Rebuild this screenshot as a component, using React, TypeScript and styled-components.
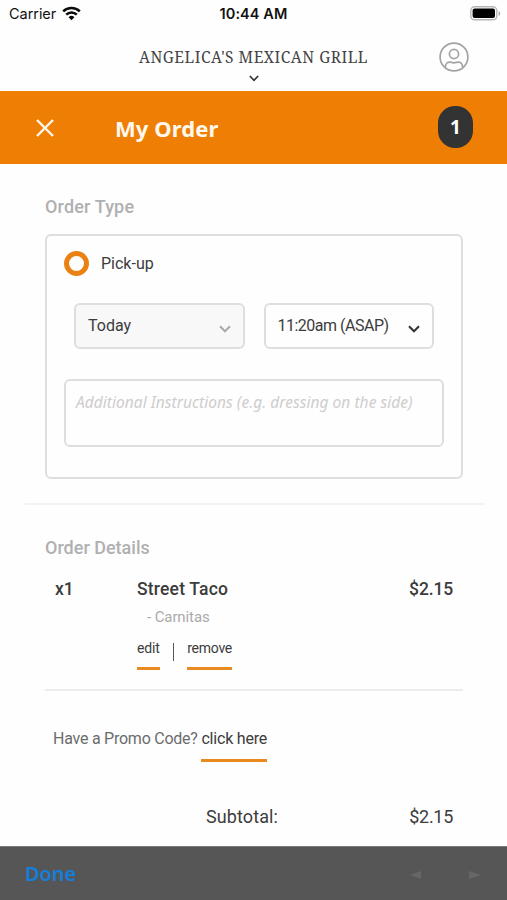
import React from "react";
import styled, { createGlobalStyle } from "styled-components";

const ORANGE = "#ef7f04";
const INK = "#3c3c3c";
const LINE = "#dedede";

const GlobalStyle = createGlobalStyle`
  *, *::before, *::after { box-sizing: border-box; }
  body { margin: 0; background: #fefefe; }
  button { border: 0; padding: 0; background: none; font: inherit; color: inherit; }
`;

const Screen = styled.div`
  width: 507px;
  height: 900px;
  overflow: hidden;
  display: flex;
  flex-direction: column;
  background: #fefefe;
  color: ${INK};
  font-family: Roboto, "Noto Sans", sans-serif;
`;

const Text = styled.span<{ $size: number; $spacing?: number; $weight?: number; $color?: string }>`
  font-size: ${(p) => p.$size}px;
  letter-spacing: ${(p) => p.$spacing ?? 0}px;
  font-weight: ${(p) => p.$weight ?? 400};
  color: ${(p) => p.$color ?? INK};
  line-height: 24px;
  white-space: pre;
`;

const StatusBar = styled.div`
  height: 28px;
  flex: none;
  display: grid;
  grid-template-columns: 1fr auto 1fr;
  align-items: center;
  padding: 0 6px 0 9px;
  color: #111;
  font-family: Inter, "Liberation Sans", sans-serif;
`;

const Carrier = styled.div`
  display: flex;
  align-items: center;
  gap: 6px;
  margin-top: -1px;
  font-size: 14.5px;
  letter-spacing: -0.05px;
  svg { margin-top: -1px; }
`;

const Clock = styled.div`
  margin: -1px 3px 0 0;
  font-size: 14.5px;
  font-weight: 600;
  letter-spacing: 0.1px;
`;

const BatteryIcon = styled.svg`
  justify-self: end;
  margin-top: -2px;
`;

const Brand = styled.header`
  height: 63px;
  flex: none;
  display: grid;
  grid-template-columns: 80px 1fr 80px;
`;

const BrandName = styled.div`
  display: flex;
  flex-direction: column;
  align-items: center;
  gap: 6px;
  padding-top: 17px;
  font-family: "Noto Serif", "DejaVu Serif", serif;
  font-size: 15.5px;
  line-height: 24px;
  letter-spacing: 0.52px;
  white-space: nowrap;
  color: #444;
`;

const Account = styled.button`
  justify-self: start;
  align-self: start;
  margin: 14px 0 0 12px;
  height: 30px;
`;

const TitleBar = styled.div`
  height: 73px;
  flex: none;
  display: flex;
  align-items: center;
  padding: 0 34px 0 36px;
  background: ${ORANGE};
`;

const Title = styled.h1`
  flex: 1;
  margin: 1px 0 0 61px;
  font-family: "Noto Sans", sans-serif;
  font-size: 22px;
  line-height: 30px;
  font-weight: 700;
  letter-spacing: 0.1px;
  color: #fff8ee;
`;

const Close = styled.button`
  height: 18px;
  margin-top: 1px;
`;

const Count = styled.div`
  width: 35px;
  height: 42px;
  margin-bottom: 2px;
  border-radius: 17px;
  background: #333;
  color: #fff;
  display: grid;
  place-items: center;
  font-family: "Noto Sans", sans-serif;
  font-size: 19px;
  font-weight: 700;
`;

const Body = styled.main`
  flex: 1;
  min-height: 0;
  overflow: hidden;
  padding: 31px 44px 0 45px;
`;

const SectionTitle = styled.h2<{ $spacing: number }>`
  margin: 0;
  font-size: 18px;
  line-height: 24px;
  font-weight: 500;
  color: #b0b0b0;
  letter-spacing: ${(p) => p.$spacing}px;
`;

const Card = styled.section`
  height: 245px;
  margin-top: 15px;
  padding: 15px 18px 0 17px;
  border: 2px solid ${LINE};
  border-radius: 6px;
`;

const Option = styled.label`
  display: flex;
  align-items: center;
  gap: 12px;
  height: 25px;
`;

const Radio = styled.span`
  width: 25px;
  height: 25px;
  border: 5px solid #ea8213;
  border-radius: 50%;
`;

const Selects = styled.div`
  display: flex;
  gap: 19px;
  margin: 27px 0 0 10px;
`;

const SelectBox = styled.button<{ $muted?: boolean }>`
  width: 170.5px;
  height: 46px;
  display: flex;
  align-items: center;
  justify-content: space-between;
  padding: 0 12px 0 12px;
  border: 2px solid ${LINE};
  border-radius: 6px;
  background: ${(p) => (p.$muted ? "#f8f8f8" : "#fefefe")};
  svg { margin-top: 6px; }
`;

const Notes = styled.textarea`
  display: block;
  width: 379.5px;
  height: 68px;
  margin-top: 30px;
  padding: 9px 10px;
  border: 2px solid ${LINE};
  border-radius: 6px;
  resize: none;
  background: transparent;
  font: italic 15.5px/24px "Noto Sans", sans-serif;
  letter-spacing: 0.04px;
  white-space: nowrap;
  overflow: hidden;
  &::placeholder { color: #cfcdcd; }
`;

const Divider = styled.hr<{ $wide?: boolean }>`
  height: 2px;
  border: 0;
  margin: ${(p) => (p.$wide ? "24px -22px 31px -20px" : "19px 0 0")};
  background: ${(p) => (p.$wide ? "#f2f2f2" : "#ececec")};
`;

const Item = styled.div`
  display: grid;
  grid-template-columns: 82px 1fr auto;
  padding: 0 10px;
  margin-top: 17px;
`;

const ItemInfo = styled.div`
  display: flex;
  flex-direction: column;
  align-items: flex-start;
`;

const Modifier = styled.div`
  display: flex;
  margin: 4px 0 0 10px;
`;

const Actions = styled.div`
  display: flex;
  align-items: flex-start;
  margin-top: 7px;
`;

const Separator = styled.span`
  width: 1.5px;
  height: 18px;
  margin: 7px 13px 0;
  background: #555;
`;

const Link = styled.button<{ $height: number }>`
  height: ${(p) => p.$height}px;
  display: flex;
  align-items: flex-start;
  border-bottom: 3px solid #e98a20;
`;

const Promo = styled.div`
  display: flex;
  align-items: flex-start;
  margin: 36px 0 0 8px;
`;

const Total = styled.div`
  display: grid;
  grid-template-columns: 1fr auto;
  margin: 43px 10px 0 161px;
`;

const Toolbar = styled.footer`
  height: 54px;
  flex: none;
  display: flex;
  align-items: center;
  justify-content: space-between;
  padding: 0 25px;
  border-top: 1px solid #7a7a7a;
  background: #565656;
`;

const Done = styled.button`
  font-family: "Noto Sans", sans-serif;
  font-size: 20px;
  line-height: 26px;
  font-weight: 600;
  letter-spacing: -0.1px;
  color: #127fdc;
`;

const Steps = styled.div`
  display: flex;
  gap: 47px;
  margin-top: 3px;
  svg { display: block; }
`;

const Chevron = ({ color, width = 12, stroke = 2 }: { color: string; width?: number; stroke?: number }) => (
  <svg width={width} height={(width * 8) / 12} viewBox="0 0 12 8" fill="none" stroke={color} strokeWidth={stroke}>
    <path d="M1 1.2 6 6.3 11 1.2" />
  </svg>
);

export default function App() {
  return (
    <Screen>
      <GlobalStyle />
      <StatusBar>
        <Carrier>
          Carrier
          <svg width="19" height="15" viewBox="0 0 19 15" fill="none" stroke="#0a0a0a" strokeWidth="2.5">
            <path d="M1.2 5.4a11.8 11.8 0 0 1 16.6 0" />
            <path d="M4.2 8.6a7.5 7.5 0 0 1 10.6 0" />
            <path d="M9.5 14.2 6.6 11.2a4.1 4.1 0 0 1 5.8 0Z" fill="#0a0a0a" stroke="none" />
          </svg>
        </Carrier>
        <Clock>10:44 AM</Clock>
        <BatteryIcon width="31" height="15" viewBox="0 0 31 15">
          <rect x="0.8" y="0.8" width="26" height="13" rx="3.8" fill="#fff" stroke="#b5b5b5" strokeWidth="1.4" />
          <rect x="2.6" y="2.6" width="22.4" height="9.4" rx="2" fill="#000" />
          <path d="M28.6 5v5c2.2-1 2.2-4 0-5Z" fill="#aaa" />
        </BatteryIcon>
      </StatusBar>
      <Brand>
        <span />
        <BrandName>
          ANGELICA'S MEXICAN GRILL
          <Chevron color="#333" width={10} />
        </BrandName>
        <Account aria-label="Account">
          <svg width="30" height="30" viewBox="0 0 30 30" fill="none" stroke="#a3a3a3" strokeWidth="1.7">
            <circle cx="15" cy="15" r="13.9" />
            <circle cx="15" cy="12" r="4.6" />
            <path d="M6.500 25.500v-1.200c0-2.400 1.800-4.200 4.200-4.200 1.500 0 2.400.7 4.300.7s2.800-.7 4.300-.7c2.400 0 4.200 1.800 4.200 4.200v1.200" />
          </svg>
        </Account>
      </Brand>
      <TitleBar>
        <Close aria-label="Close">
          <svg width="18" height="18" viewBox="0 0 18 18" stroke="#fff8ee" strokeWidth="2.4">
            <path d="M1 1l16 16M17 1 1 17" />
          </svg>
        </Close>
        <Title>My Order</Title>
        <Count>1</Count>
      </TitleBar>
      <Body>
        <SectionTitle $spacing={0.15}>Order Type</SectionTitle>
        <Card>
          <Option>
            <Radio />
            <Text $size={16}>Pick-up</Text>
          </Option>
          <Selects>
            <SelectBox $muted>
              <Text $size={16}>Today</Text>
              <Chevron color="#aaa" />
            </SelectBox>
            <SelectBox>
              <Text $size={16} $spacing={-0.5}>11:20am (ASAP)</Text>
              <Chevron color="#333" />
            </SelectBox>
          </Selects>
          <Notes placeholder="Additional Instructions (e.g. dressing on the side)" />
        </Card>
        <Divider $wide />
        <SectionTitle $spacing={0}>Order Details</SectionTitle>
        <Item>
          <Text $size={17.5} $weight={500}>x1</Text>
          <ItemInfo>
            <Text $size={17.5} $weight={500} $spacing={0.2}>Street Taco</Text>
            <Modifier>
              <Text $size={15} $spacing={-0.1} $color="#aaa">- Carnitas</Text>
            </Modifier>
            <Actions>
              <Link $height={34}><Text $size={14} $spacing={-0.15}>edit</Text></Link>
              <Separator />
              <Link $height={34}><Text $size={14} $spacing={-0.25}>remove</Text></Link>
            </Actions>
          </ItemInfo>
          <Text $size={17.5} $weight={500} $spacing={-0.15}>$2.15</Text>
        </Item>
        <Divider />
        <Promo>
          <Text $size={16} $spacing={-0.24} $color="#6c6c6c">Have a Promo Code? </Text>
          <Link $height={35}><Text $size={16} $spacing={-0.2}>click here</Text></Link>
        </Promo>
        <Total>
          <Text $size={18} $spacing={0.1}>Subtotal:</Text>
          <Text $size={18} $spacing={-0.3}>$2.15</Text>
        </Total>
      </Body>
      <Toolbar>
        <Done>Done</Done>
        <Steps>
          <svg width="12" height="10" viewBox="0 0 12 10" fill="#666"><path d="M0 5 11 1v8Z" /></svg>
          <svg width="13" height="10" viewBox="0 0 13 10" fill="#666"><path d="M12 5 0 1v8Z" /></svg>
        </Steps>
      </Toolbar>
    </Screen>
  );
}
